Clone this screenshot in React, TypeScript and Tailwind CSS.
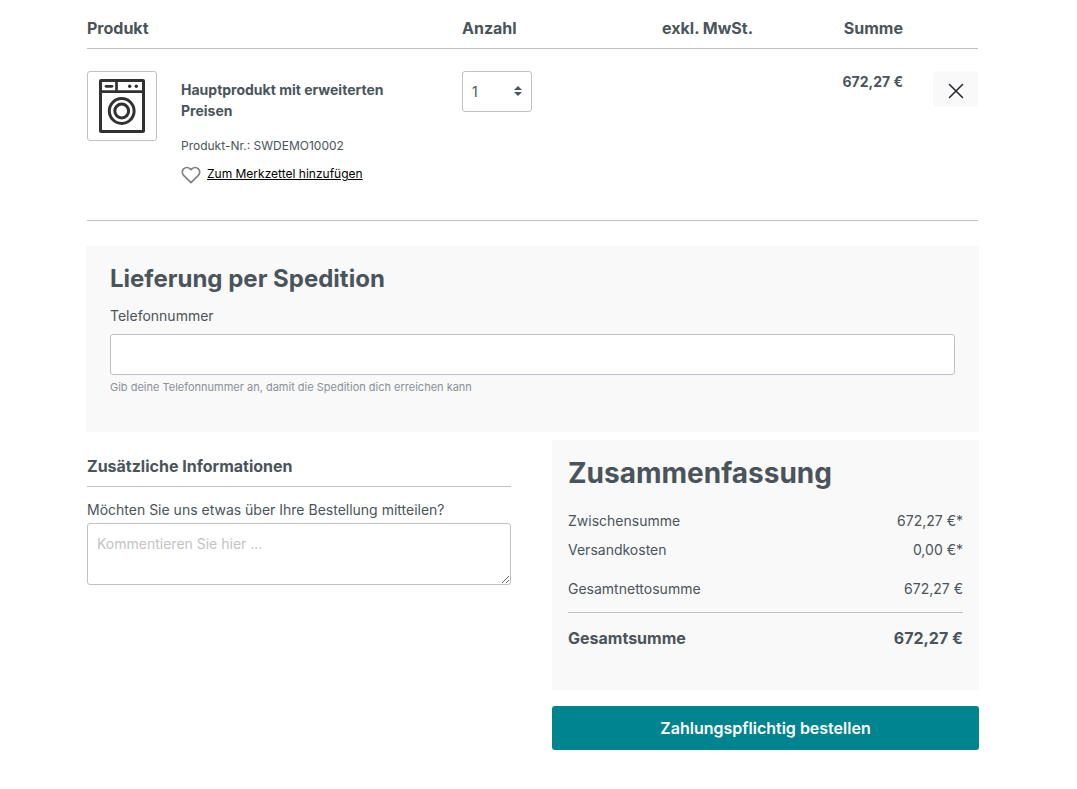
import React from "react";

function WashingMachine() {
  return (
    <svg viewBox="0 0 48 56" className="h-14 w-12" fill="none" stroke="#303231" role="img" aria-label="Hauptprodukt mit erweiterten Preisen">
      <rect x="2.5" y="2.5" width="43" height="51" rx="0.5" strokeWidth="3" />
      <path d="M2 13.7H46M18.5 3V13" strokeWidth="2.7" />
      <path d="M8 8.3H14" strokeWidth="2.7" strokeLinecap="round" />
      <circle cx="31.7" cy="8.3" r="1.7" fill="#303231" stroke="none" />
      <circle cx="38.3" cy="8.3" r="1.7" fill="#303231" stroke="none" />
      <circle cx="23.7" cy="33" r="12.4" strokeWidth="3" />
      <circle cx="23.7" cy="33" r="6.9" strokeWidth="3" />
    </svg>
  );
}

function HeartIcon() {
  return (
    <svg viewBox="0 0 24 24" className="size-5 shrink-0" fill="none" stroke="#808080" aria-hidden="true">
      <path
        d="M20.84 4.61a5.5 5.5 0 0 0-7.78 0L12 5.67l-1.06-1.06a5.5 5.5 0 0 0-7.78 7.78L12 21.23l8.84-8.84a5.5 5.5 0 0 0 0-7.78z"
        strokeWidth="2"
        strokeLinejoin="round"
      />
    </svg>
  );
}

function CartTable() {
  return (
    <table className="w-full table-fixed border-collapse text-left">
      <colgroup>
        <col />
        <col className="w-[141px]" />
        <col className="w-[150px]" />
        <col className="w-[150px]" />
        <col className="w-[75px]" />
      </colgroup>
      <thead>
        <tr className="border-b border-[#bcc1c7] text-base">
          <th scope="col" className="pb-2 font-bold">Produkt</th>
          <th scope="col" className="pb-2 font-bold">Anzahl</th>
          <th scope="col" className="pb-2 text-right font-bold">exkl. MwSt.</th>
          <th scope="col" className="pb-2 text-right font-bold">Summe</th>
          <td />
        </tr>
      </thead>
      <tbody>
        <tr className="border-b border-[#bcc1c7] align-top">
          <td className="pt-[22px] pb-[35px]">
            <div className="flex gap-6">
              <a href="#produkt" className="flex size-[70px] shrink-0 items-center justify-center rounded-[3px] border border-[#bcc1c7]">
                <WashingMachine />
              </a>
              <div className="pt-2">
                <a href="#produkt" className="block max-w-[230px] text-sm leading-[21px] font-bold">
                  Hauptprodukt mit erweiterten Preisen
                </a>
                <p className="mt-4 text-xs leading-[18px]">Produkt-Nr.: SWDEMO10002</p>
                <button type="button" className="mt-2.5 flex items-start gap-1.5 text-xs leading-[18px] text-black">
                  <HeartIcon />
                  <span className="underline">Zum Merkzettel hinzufügen</span>
                </button>
              </div>
            </div>
          </td>
          <td className="pt-[22px]">
            <div className="relative w-[70px]">
              <select
                aria-label="Anzahl"
                defaultValue="1"
                className="h-[41px] w-full appearance-none rounded-[3px] border border-[#bcc1c7] bg-white px-[9px] text-sm"
              >
                <option>1</option>
                <option>2</option>
                <option>3</option>
              </select>
              <svg viewBox="0 0 8 10" className="pointer-events-none absolute top-[15px] right-2.5 h-2.5 w-2" fill="#4a545b" aria-hidden="true">
                <path d="M4 0L8 4H0zM4 10L0 6h8z" />
              </svg>
            </div>
          </td>
          <td />
          <td className="pt-[22px] text-right text-sm leading-[22px] font-bold">672,27 €</td>
          <td className="pt-[22px]">
            <button type="button" aria-label="Entfernen" className="ml-auto flex h-9 w-[45px] items-center justify-center rounded-[3px] bg-[#f9f9f9]">
              <svg viewBox="0 0 16 16" className="mt-1 size-4" fill="none" stroke="#212529" strokeWidth="1.5" strokeLinecap="round" aria-hidden="true">
                <path d="M1.5 1.5l13 13M14.5 1.5l-13 13" />
              </svg>
            </button>
          </td>
        </tr>
      </tbody>
    </table>
  );
}

function DeliverySection() {
  return (
    <section className="mt-[25px] bg-[#f9f9f9] px-6 pt-[18px] pb-[37px]">
      <h2 className="text-2xl leading-[30px] font-bold">Lieferung per Spedition</h2>
      <label htmlFor="phone" className="mt-3 block text-sm">Telefonnummer</label>
      <input
        id="phone"
        type="tel"
        aria-describedby="phone-help"
        className="mt-2 block h-[41px] w-full rounded-[3px] border border-[#bcc1c7] bg-white px-[9px] text-sm"
      />
      <p id="phone-help" className="mt-1 text-[11px] leading-4 text-[#8a8f98]">
        Gib deine Telefonnummer an, damit die Spedition dich erreichen kann
      </p>
    </section>
  );
}

function CommentSection() {
  return (
    <section className="pt-[14px] pr-0.5 pl-px">
      <h2 className="border-b border-[#bcc1c7] pb-2 text-base font-bold">Zusätzliche Informationen</h2>
      <label htmlFor="comment" className="mt-[13px] block text-sm">
        Möchten Sie uns etwas über Ihre Bestellung mitteilen?
      </label>
      <textarea
        id="comment"
        placeholder="Kommentieren Sie hier ..."
        className="mt-[3px] block h-[62px] w-full resize rounded-[3px] border border-[#bcc1c7] bg-white px-[9px] py-2.5 text-sm placeholder:text-[#c3c3c3]"
      />
    </section>
  );
}

function SummaryRow({ label, value }: { label: string; value: string }) {
  return (
    <div className="flex justify-between py-1 text-sm leading-[21px]">
      <dt>{label}</dt>
      <dd>{value}</dd>
    </div>
  );
}

function Summary() {
  return (
    <aside>
      <div className="bg-[#f9f9f9] px-4 pt-4 pb-10">
        <h2 className="text-[28px] leading-[34px] font-bold">Zusammenfassung</h2>
        <dl className="mt-4">
          <SummaryRow label="Zwischensumme" value="672,27 €*" />
          <SummaryRow label="Versandkosten" value="0,00 €*" />
          <div className="mt-2.5 border-b border-[#bcc1c7] pb-[9px]">
            <SummaryRow label="Gesamtnettosumme" value="672,27 €" />
          </div>
          <div className="mt-[13px] flex justify-between text-base font-bold">
            <dt>Gesamtsumme</dt>
            <dd>672,27 €</dd>
          </div>
        </dl>
      </div>
      <button type="submit" className="mt-4 h-11 w-full rounded-[3px] bg-[#008490] text-base font-semibold text-white">
        Zahlungspflichtig bestellen
      </button>
    </aside>
  );
}

export default function App() {
  return (
    <main className="bg-white pt-4 pr-[98px] pb-10 pl-[86px] font-['Inter','Liberation_Sans',sans-serif] text-[#4a545b]">
      <form onSubmit={(event) => event.preventDefault()}>
        <div className="px-px">
          <CartTable />
        </div>
        <DeliverySection />
        <div className="mt-2 grid grid-cols-2 gap-[39px]">
          <CommentSection />
          <Summary />
        </div>
      </form>
    </main>
  );
}
